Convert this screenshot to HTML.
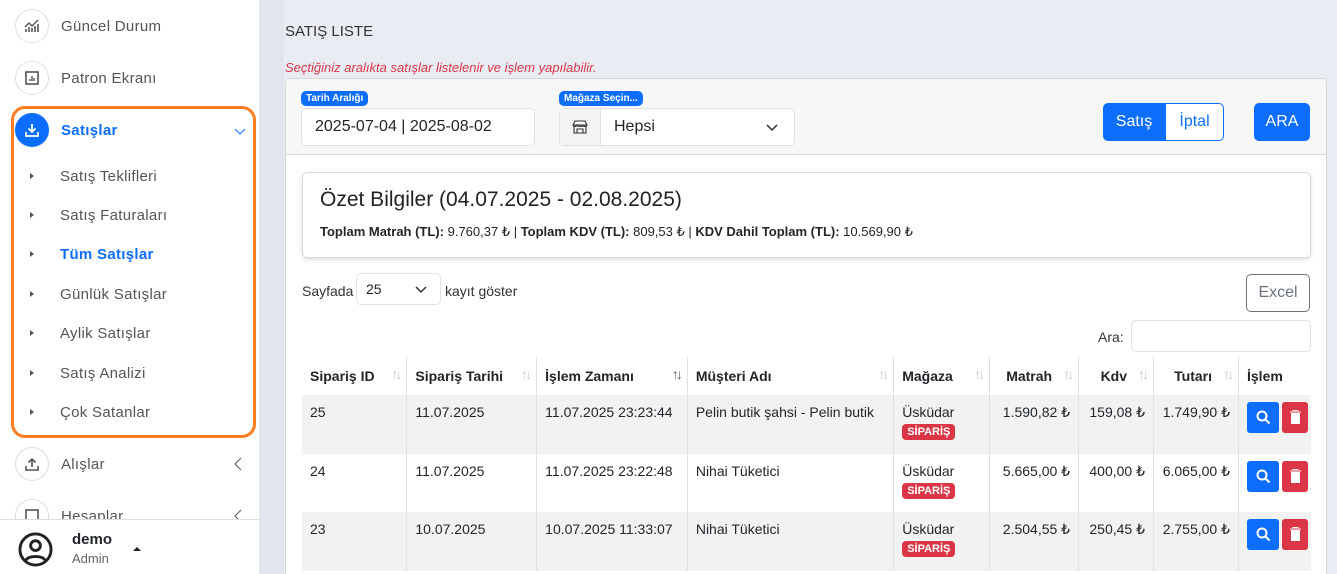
<!DOCTYPE html>
<html style="overflow:hidden;height:574px"><head><meta charset="utf-8"><style>
*{box-sizing:border-box;margin:0;padding:0}
body{width:1337px;height:574px;overflow:hidden;background:#e9ecf3;font-family:"Liberation Sans",sans-serif;color:#212529;position:relative}
.sb{position:absolute;left:0;top:0;width:259px;height:574px;background:#fff}
.strip{position:absolute;left:259px;top:0;width:25px;height:574px;background:#e2e5ec}
.it{position:absolute;left:15px;height:34px;display:flex;align-items:center;font-size:15px;color:#555;letter-spacing:.3px}
.ic{width:34px;height:34px;border:1px solid #ddd;border-radius:50%;display:flex;align-items:center;justify-content:center;margin-right:12px;background:#fff}
.sub{position:absolute;left:30px;font-size:15px;color:#555;letter-spacing:.3px}
.sub:before{content:"";position:absolute;left:0;top:5px;border-left:4px solid #555;border-top:3px solid transparent;border-bottom:3px solid transparent}
.sub span{margin-left:30px}
.orange{position:absolute;left:11px;top:106px;width:245px;height:332px;border:3px solid #fd7e23;border-radius:14px}
.card{position:absolute;left:285px;top:78px;width:1042px;height:496px;background:#fff;border:1px solid #d8d8d8;border-bottom:none;border-radius:5px 5px 0 0;overflow:hidden}
.fhead{height:76px;background:#f7f7f7;border-bottom:1px solid #d8d8d8;position:relative}
.lbl{position:absolute;background:#0d6efd;color:#fff;font-size:10px;font-weight:bold;padding:2px 5px;border-radius:5px}
.inp{position:absolute;background:#fff;border:1px solid #dee2e6;border-radius:5px;font-size:16px;display:flex;align-items:center}
.btn{position:absolute;border-radius:5px;font-size:16px;display:flex;align-items:center;justify-content:center}
table{position:absolute;left:16px;top:278px;width:1009px;border-collapse:collapse;font-size:14px}
th{text-align:left;height:38px;padding:0 26px 0 8px;font-weight:bold;position:relative;border-left:1px solid #dee2e6}
th:first-child,td:first-child{border-left:none}
th i{position:absolute;right:7px;top:9px;font-style:normal;color:#c8c8c8;font-size:14px;letter-spacing:-3px}
td{vertical-align:top;padding:9px 8px 0;border-left:1px solid #dee2e6;height:58.5px}
tr.g td{background:#f2f2f2}
.r{text-align:right}
.badge{display:inline-block;background:#dc3545;color:#fff;font-size:11px;font-weight:bold;padding:2px 5px;border-radius:4px;margin-top:4px}
.ab{display:inline-block;width:32px;height:31px;border-radius:3px;vertical-align:top;margin-right:3px;position:relative}
</style></head><body>
<div class="sb">
 <div class="it" style="top:9px"><div class="ic"><svg width="16" height="14" viewBox="0 0 16 14"><path d="M1 8l4-4 3 3 6-6" fill="none" stroke="#555" stroke-width="1.4"/><path d="M2 13v-3M5 13v-5M8 13v-4M11 13v-6M14 13v-8" stroke="#555" stroke-width="1.6"/></svg></div>Güncel Durum</div>
 <div class="it" style="top:61px"><div class="ic"><svg width="14" height="14" viewBox="0 0 14 14"><rect x="1" y="1" width="12" height="12" fill="none" stroke="#555" stroke-width="1.6"/><path d="M5 10V8M7 10V5M9 10V7" stroke="#555" stroke-width="1.4"/></svg></div>Patron Ekranı</div>
 <div class="it" style="top:113px;color:#0d6efd;font-weight:bold"><div class="ic" style="background:#0d6efd;border-color:#0d6efd"><svg width="16" height="16" viewBox="0 0 16 16"><path d="M8 2v8M4.5 6.5L8 10l3.5-3.5M2 10v4h12v-4" fill="none" stroke="#fff" stroke-width="1.8"/></svg></div>Satışlar</div>
 <svg style="position:absolute;left:234px;top:128px" width="12" height="7"><path d="M1 1l5 5 5-5" fill="none" stroke="#0d6efd" stroke-width="1"/></svg>
 <div class="sub" style="top:168px"><span>Satış Teklifleri</span></div>
 <div class="sub" style="top:207px"><span>Satış Faturaları</span></div>
 <div class="sub" style="top:246px;color:#0d6efd;font-weight:bold"><span>Tüm Satışlar</span></div>
 <div class="sub" style="top:286px"><span>Günlük Satışlar</span></div>
 <div class="sub" style="top:325px"><span>Aylik Satışlar</span></div>
 <div class="sub" style="top:365px"><span>Satış Analizi</span></div>
 <div class="sub" style="top:404px"><span>Çok Satanlar</span></div>
 <div class="orange"></div>
 <div class="it" style="top:447px"><div class="ic"><svg width="16" height="16" viewBox="0 0 16 16"><path d="M8 11V3M4.5 6.5L8 3l3.5 3.5M2 10v4h12v-4" fill="none" stroke="#555" stroke-width="1.6"/></svg></div>Alışlar</div>
 <svg style="position:absolute;left:234px;top:457px" width="8" height="14"><path d="M7 1L1 7l6 6" fill="none" stroke="#666" stroke-width="1.2"/></svg>
 <div class="it" style="top:499px"><div class="ic"><svg width="14" height="14"><rect x="1" y="1" width="12" height="12" fill="none" stroke="#555" stroke-width="1.6"/></svg></div>Hesaplar</div>
 <svg style="position:absolute;left:234px;top:509px" width="8" height="14"><path d="M7 1L1 7l6 6" fill="none" stroke="#666" stroke-width="1.2"/></svg>
 <div style="position:absolute;left:0;top:519px;width:259px;height:55px;background:#fff;border-top:1px solid #ddd">
  <svg style="position:absolute;left:18px;top:12px" width="35" height="35" viewBox="0 0 36 36"><circle cx="18" cy="18" r="16" fill="none" stroke="#222" stroke-width="3"/><circle cx="18" cy="14" r="5" fill="none" stroke="#222" stroke-width="3"/><path d="M8 29c3-5 17-5 20 0" fill="none" stroke="#222" stroke-width="3"/></svg>
  <div style="position:absolute;left:72px;top:11px;font-size:15px;font-weight:bold">demo</div>
  <div style="position:absolute;left:72px;top:31px;font-size:13px;color:#666">Admin</div>
  <div style="position:absolute;left:133px;top:27px;border-bottom:4px solid #222;border-left:4px solid transparent;border-right:4px solid transparent"></div>
 </div>
</div>
<div class="strip"></div>
<div style="position:absolute;left:285px;top:23px;font-size:15px;color:#333">SATIŞ LISTE</div>
<div style="position:absolute;left:285px;top:60px;font-size:13px;color:#dc3545;font-style:italic">Seçtiğiniz aralıkta satışlar listelenir ve işlem yapılabilir.</div>
<div class="card">
 <div class="fhead">
  <div class="inp" style="left:15px;top:29px;width:234px;height:38px;padding-left:13px">2025-07-04 | 2025-08-02</div>
  <div class="lbl" style="left:15px;top:12px">Tarih Aralığı</div>
  <div class="inp" style="left:273px;top:29px;width:236px;height:38px"><div style="width:41px;height:36px;background:#f3f4f6;border-right:1px solid #dee2e6;display:flex;align-items:center;justify-content:center"><svg width="16" height="14" viewBox="0 0 16 14"><path d="M1 5l2-4h10l2 4zM2 5v8h12V5M1 5c1 2 3 2 4 0 1 2 3 2 3 0 1 2 3 2 3 0 1 2 3 2 4 0M5 13V9h6v4" fill="none" stroke="#333" stroke-width="1.1"/></svg></div><span style="margin-left:13px">Hepsi</span><svg style="position:absolute;right:16px;top:15px" width="12" height="8"><path d="M1 1l5 5 5-5" fill="none" stroke="#333" stroke-width="1.5"/></svg></div>
  <div class="lbl" style="left:273px;top:12px">Mağaza Seçin...</div>
  <div class="btn" style="left:817px;top:24px;width:62px;height:38px;background:#0d6efd;color:#fff;border-radius:5px 0 0 5px">Satış</div>
  <div class="btn" style="left:879px;top:24px;width:59px;height:38px;background:#fff;color:#0d6efd;border:1px solid #0d6efd;border-radius:0 5px 5px 0">İptal</div>
  <div class="btn" style="left:968px;top:24px;width:56px;height:38px;background:#0d6efd;color:#fff">ARA</div>
 </div>
 <div style="position:absolute;left:16px;top:93px;width:1009px;height:86px;border:1px solid #d8d8d8;border-radius:5px;box-shadow:0 2px 4px rgba(0,0,0,.12)">
  <div style="position:absolute;left:17px;top:15px;font-size:21px;color:#222">Özet Bilgiler (04.07.2025 - 02.08.2025)</div>
  <div style="position:absolute;left:17px;top:51px;font-size:13px"><b>Toplam Matrah (TL):</b> 9.760,37 ₺ | <b>Toplam KDV (TL):</b> 809,53 ₺ | <b>KDV Dahil Toplam (TL):</b> 10.569,90 ₺</div>
 </div>
 <div style="position:absolute;left:16px;top:204px;font-size:14px;color:#333">Sayfada</div>
 <div class="inp" style="left:70px;top:194px;width:85px;height:32px;font-size:14px;padding-left:9px">25<svg style="position:absolute;right:13px;top:12px" width="12" height="8"><path d="M1 1l5 5 5-5" fill="none" stroke="#333" stroke-width="1.5"/></svg></div>
 <div style="position:absolute;left:159px;top:204px;font-size:14px;color:#333">kayıt göster</div>
 <div class="btn" style="left:960px;top:195px;width:64px;height:38px;border:1px solid #6c757d;color:#6c757d">Excel</div>
 <div style="position:absolute;left:812px;top:250px;font-size:14px;color:#333">Ara:</div>
 <div class="inp" style="left:845px;top:241px;width:180px;height:32px"></div>
 <table>
  <tr><th style="width:105px">Sipariş ID<i>↑↓</i></th><th style="width:130px">Sipariş Tarihi<i>↑↓</i></th><th style="width:151px">İşlem Zamanı<i style="color:#555">↑↓</i></th><th style="width:207px">Müşteri Adı<i>↑↓</i></th><th style="width:96px">Mağaza<i>↑↓</i></th><th style="width:89px" class="r">Matrah<i>↑↓</i></th><th style="width:75px" class="r">Kdv<i>↑↓</i></th><th style="width:85px" class="r">Tutarı<i>↑↓</i></th><th>İşlem</th></tr>
  <tr class="g"><td>25</td><td>11.07.2025</td><td>11.07.2025 23:23:44</td><td>Pelin butik şahsi - Pelin butik</td><td>Üsküdar<br><span class="badge">SİPARİŞ</span></td><td class="r">1.590,82 ₺</td><td class="r">159,08 ₺</td><td class="r">1.749,90 ₺</td><td style="padding:7px 0 0 8px;white-space:nowrap"><span class="ab" style="background:#0d6efd"><svg style="position:absolute;left:9px;top:8px" width="15" height="15"><circle cx="6" cy="6" r="4.5" fill="none" stroke="#fff" stroke-width="2"/><path d="M9.5 9.5l4 4" stroke="#fff" stroke-width="2.2"/></svg></span><span class="ab" style="background:#dc3545;width:26px"><svg style="position:absolute;left:8px;top:8px" width="11" height="14"><path d="M0 2h11M3 1V0h5v1M1.5 3.5h8v10h-8z" fill="#fff" stroke="#fff"/></svg></span></td></tr>
  <tr><td>24</td><td>11.07.2025</td><td>11.07.2025 23:22:48</td><td>Nihai Tüketici</td><td>Üsküdar<br><span class="badge">SİPARİŞ</span></td><td class="r">5.665,00 ₺</td><td class="r">400,00 ₺</td><td class="r">6.065,00 ₺</td><td style="padding:7px 0 0 8px;white-space:nowrap"><span class="ab" style="background:#0d6efd"><svg style="position:absolute;left:9px;top:8px" width="15" height="15"><circle cx="6" cy="6" r="4.5" fill="none" stroke="#fff" stroke-width="2"/><path d="M9.5 9.5l4 4" stroke="#fff" stroke-width="2.2"/></svg></span><span class="ab" style="background:#dc3545;width:26px"><svg style="position:absolute;left:8px;top:8px" width="11" height="14"><path d="M0 2h11M3 1V0h5v1M1.5 3.5h8v10h-8z" fill="#fff" stroke="#fff"/></svg></span></td></tr>
  <tr class="g"><td>23</td><td>10.07.2025</td><td>10.07.2025 11:33:07</td><td>Nihai Tüketici</td><td>Üsküdar<br><span class="badge">SİPARİŞ</span></td><td class="r">2.504,55 ₺</td><td class="r">250,45 ₺</td><td class="r">2.755,00 ₺</td><td style="padding:7px 0 0 8px;white-space:nowrap"><span class="ab" style="background:#0d6efd"><svg style="position:absolute;left:9px;top:8px" width="15" height="15"><circle cx="6" cy="6" r="4.5" fill="none" stroke="#fff" stroke-width="2"/><path d="M9.5 9.5l4 4" stroke="#fff" stroke-width="2.2"/></svg></span><span class="ab" style="background:#dc3545;width:26px"><svg style="position:absolute;left:8px;top:8px" width="11" height="14"><path d="M0 2h11M3 1V0h5v1M1.5 3.5h8v10h-8z" fill="#fff" stroke="#fff"/></svg></span></td></tr>
 </table>
</div>
</body></html>
